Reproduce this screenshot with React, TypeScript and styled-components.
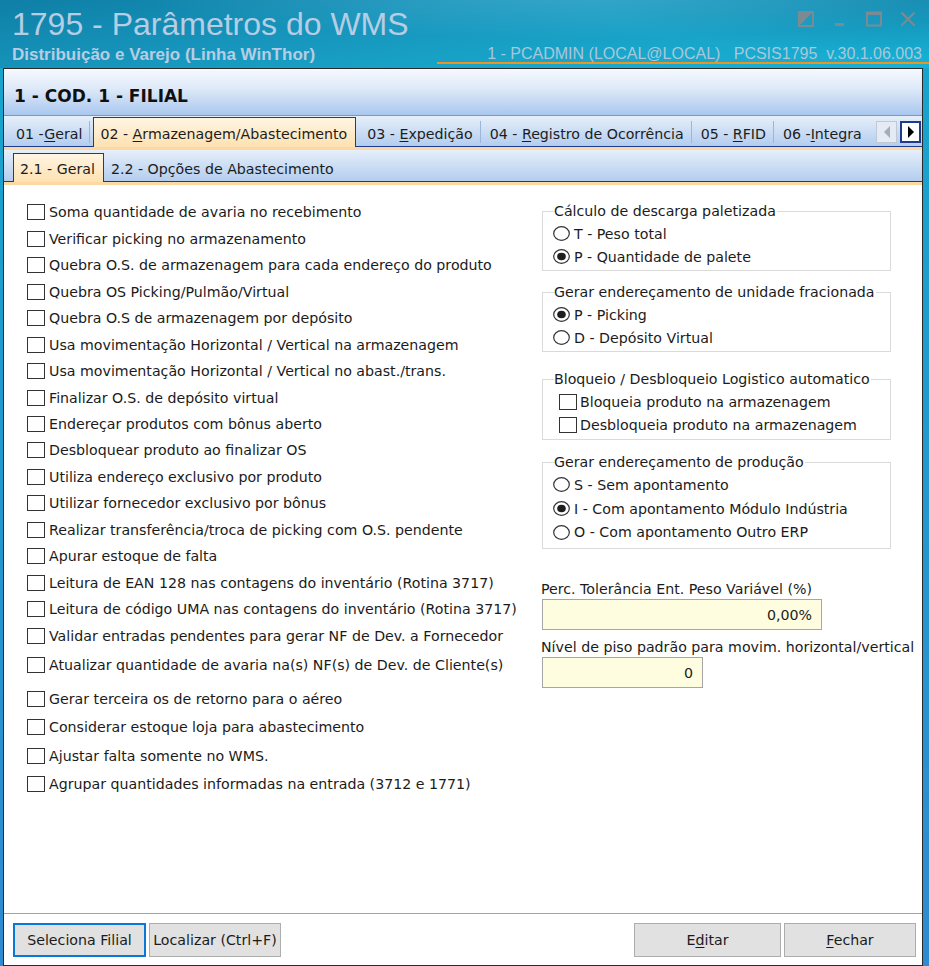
import React from 'react';
import styled, { createGlobalStyle, css } from 'styled-components';

const UI_FONT = `"DejaVu Sans", Tahoma, Verdana, sans-serif`;
const TITLE_FONT = `"Liberation Sans", Arial, sans-serif`;

const GlobalStyle = createGlobalStyle`
  html, body { margin: 0; padding: 0; }
  body {
    width: 929px;
    height: 966px;
    overflow: hidden;
    background: linear-gradient(#16a6cc, #2f8bd1);
    font-family: ${UI_FONT};
    color: #1b1b1b;
  }
`;

/* ---------- title bar ---------- */

const TitleBar = styled.header`
  height: 68px;
  box-sizing: border-box;
  padding-bottom: 4px;
  display: grid;
  grid-template-columns: 1fr auto;
  grid-template-rows: 44px 20px;
  background:
    radial-gradient(70% 110% at 62% -20%, rgba(150, 215, 240, 0.28) 0%, rgba(150, 215, 240, 0) 70%),
    radial-gradient(50% 120% at 100% 0%, rgba(10, 90, 130, 0.35) 0%, rgba(10, 90, 130, 0) 70%),
    linear-gradient(172deg, #0f7fa6 0%, #1796bd 40%, #19a8cc 75%, #15b2d6 100%);
  font-family: ${TITLE_FONT};
  color: #b6cde3;
`;

const AppTitle = styled.h1`
  margin: 0;
  padding: 5px 0 0 12px;
  font-size: 32px;
  line-height: 38px;
  font-weight: normal;
  white-space: nowrap;
`;

const WindowControls = styled.div`
  justify-self: end;
  display: flex;
  align-items: flex-start;
  gap: 18px;
  padding: 11px 13px 0 0;
`;

const ControlGlyph = styled.svg`
  display: block;
  width: 16px;
  height: 16px;
  color: #7c8a93;
`;

const Subtitle = styled.div`
  padding: 1px 0 0 12px;
  font-size: 17px;
  line-height: 19px;
  font-weight: bold;
  white-space: nowrap;
`;

const SessionInfo = styled.div`
  width: 492px;
  box-sizing: border-box;
  padding: 1px 7px 0 0;
  border-bottom: 2px solid #ef9322;
  font-size: 16px;
  line-height: 17px;
  text-align: right;
  white-space: pre;
  color: #a9c7da;
`;

/* ---------- window frame ---------- */

const Window = styled.main`
  height: 898px;
  margin: 0 6px 0 3px;
  box-sizing: border-box;
  border: 1px solid #2a2a2a;
  background: #ffffff;
  display: flex;
  flex-direction: column;
`;

const Header = styled.div`
  flex: none;
  height: 47px;
  box-sizing: border-box;
  padding: 8px 0 0 10px;
  display: flex;
  align-items: center;
  background: linear-gradient(#f6f9fe 0%, #dce8f8 45%, #a9c7ee 100%);
  border-bottom: 1px solid #6d9ad8;
  font-size: 17px;
  font-weight: bold;
  color: #101010;
`;

const TabStrip = styled.div<{ $sub?: boolean }>`
  flex: none;
  box-sizing: border-box;
  height: ${p => (p.$sub ? '35px' : '31px')};
  display: flex;
  align-items: flex-end;
  padding: 0 1px 0 ${p => (p.$sub ? '9px' : '3px')};
  background: linear-gradient(#e6effa, #b3cdef);
  border-bottom: 1px solid #1d3a8c;
  ${p => p.$sub && css`border-top: 3px solid #fcd8a2;`}
`;

const TabList = styled.div`
  flex: 1;
  min-width: 0;
  height: 100%;
  display: flex;
  align-items: flex-end;
  overflow-x: clip;
`;

const Tab = styled.div<{ $active?: boolean; $sub?: boolean }>`
  flex: none;
  box-sizing: border-box;
  display: flex;
  align-items: center;
  white-space: pre;
  font-size: 14.2px;
  color: #1c1c1c;
  ${p =>
    p.$active
      ? css`
          height: ${p.$sub ? '29px' : '30px'};
          margin: 0 ${p.$sub ? 0 : 2}px -1px ${p.$sub ? 0 : 3}px;
          padding: 2px 8px 0 6px;
          background: linear-gradient(#fff5e3, #fde1b1);
          border: 1px solid #1d3a8c;
          border-bottom: none;
          position: relative;
          z-index: 1;
        `
      : css`
          height: 22px;
          margin: 0 0 3px 0;
          padding: 3px 7px 0 ${p.$sub ? 7 : 9}px;
          border-right: 1px solid #9cb6da;
          &:last-child { border-right: none; }
        `}
`;

const TabLabel = styled.span`
  white-space: pre;
`;

const Mnemonic = styled.span`
  text-decoration: underline;
  text-underline-offset: 2px;
`;

const ScrollButtons = styled.div`
  flex: none;
  display: flex;
  gap: 3px;
  align-self: center;
  margin: 2px 0 0 4px;
`;

const ScrollButton = styled.div<{ $enabled?: boolean }>`
  width: 21px;
  height: 22px;
  box-sizing: border-box;
  display: flex;
  align-items: center;
  justify-content: center;
  ${p =>
    p.$enabled
      ? css`
          background: #ffffff;
          border: 2px solid #1d3a8c;
          color: #000000;
        `
      : css`
          background: #e4ebf4;
          border: 1px solid #bfc9d6;
          color: #a3acb8;
        `}
`;

/* ---------- page content ---------- */

const Content = styled.section`
  flex: 1;
  box-sizing: border-box;
  border-top: 3px solid #fcd8a2;
  display: grid;
  grid-template-columns: 514px 350px;
  padding: 0 0 0 23px;
`;

const CheckList = styled.div`
  display: flex;
  flex-direction: column;
  padding-top: 14px;
`;

const CheckRow = styled.label<{ $extra?: number }>`
  height: 26.47px;
  margin-top: ${p => p.$extra ?? 0}px;
  display: flex;
  align-items: center;
  gap: 4px;
  font-size: 14.2px;
  white-space: nowrap;
  color: #1b1b1b;
`;

const BoxGlyph = styled.svg`
  flex: none;
  display: block;
`;

const SideColumn = styled.div`
  display: flex;
  flex-direction: column;
  padding-top: 18px;
`;

const GroupBox = styled.fieldset<{ $gap?: number; $tail?: number; $row?: number }>`
  margin: ${p => p.$gap ?? 0}px 0 0 1px;
  padding: 3px 0 ${p => p.$tail ?? 2}px 10px;
  border: 1px solid #dadada;
  min-width: 0;
  --row: ${p => p.$row ?? 23}px;
`;

const Legend = styled.legend`
  padding: 0 1px 0 0;
  margin-left: 1px;
  font-size: 14.2px;
  line-height: 16px;
  color: #1b1b1b;
  white-space: nowrap;
`;

const OptionRow = styled.label<{ $indent?: number }>`
  height: var(--row);
  display: flex;
  align-items: center;
  gap: ${p => (p.$indent ? 3 : 4)}px;
  padding-left: ${p => p.$indent ?? 0}px;
  font-size: 14.2px;
  white-space: nowrap;
`;

const FieldLabel = styled.div<{ $gap: number }>`
  margin-top: ${p => p.$gap}px;
  font-size: 14.2px;
  line-height: 18px;
  white-space: nowrap;
`;

const NumberField = styled.div<{ $width: number }>`
  width: ${p => p.$width}px;
  height: 31px;
  margin: 1px 0 0 1px;
  box-sizing: border-box;
  border: 1px solid #a6a6a6;
  background: #fffde0;
  display: flex;
  align-items: center;
  justify-content: flex-end;
  padding-right: 9px;
  font-size: 14.2px;
`;

/* ---------- footer ---------- */

const Footer = styled.footer`
  flex: none;
  height: 52px;
  box-sizing: border-box;
  border-top: 1px solid #a3a3a3;
  display: flex;
  align-items: flex-start;
  gap: 3px;
  padding: 9px 6px 0 9px;
`;

const Spacer = styled.div`
  flex: 1;
`;

const Button = styled.button<{ $width: number; $focused?: boolean }>`
  width: ${p => p.$width}px;
  height: 34px;
  box-sizing: border-box;
  margin: 0;
  padding: 0;
  background: #e1e1e1;
  border: ${p => (p.$focused ? '2px solid #0a78d6' : '1px solid #adadad')};
  font-family: ${UI_FONT};
  font-size: 14.2px;
  color: #1b1b1b;
  white-space: nowrap;
  cursor: default;
`;

/* ---------- small drawings ---------- */

const CheckBox = () => (
  <BoxGlyph width="18" height="16" viewBox="0 0 18 16">
    <rect x="0.5" y="0.5" width="17" height="15" fill="#ffffff" stroke="#333333" />
  </BoxGlyph>
);

const Radio = ({ checked }: { checked?: boolean }) => (
  <BoxGlyph width="17" height="15" viewBox="0 0 17 15">
    <ellipse cx="8.5" cy="7.5" rx="7.8" ry="6.8" fill="#ffffff" stroke="#333333" strokeWidth="1.2" />
    {checked && <ellipse cx="8.5" cy="7.5" rx="4.3" ry="3.8" fill="#1e1e1e" />}
  </BoxGlyph>
);

const Arrow = ({ dir }: { dir: 'left' | 'right' }) => (
  <svg width="8" height="12" viewBox="0 0 8 12">
    {dir === 'left' ? <path d="M7 0 L1 6 L7 12 Z" fill="currentColor" /> : <path d="M1 0 L7 6 L1 12 Z" fill="currentColor" />}
  </svg>
);

const RestoreGlyph = () => (
  <ControlGlyph viewBox="0 0 16 16">
    <rect x="1" y="1" width="14" height="14" fill="none" stroke="currentColor" strokeWidth="2" />
    <path d="M1 1 H15 L1 15 Z" fill="currentColor" />
  </ControlGlyph>
);

const MinimizeGlyph = () => (
  <ControlGlyph viewBox="0 0 16 16">
    <rect x="3" y="12" width="9" height="3" fill="currentColor" />
  </ControlGlyph>
);

const MaximizeGlyph = () => (
  <ControlGlyph viewBox="0 0 16 16">
    <rect x="1" y="1.5" width="14" height="13" fill="none" stroke="currentColor" strokeWidth="2" />
    <rect x="1" y="1" width="14" height="3" fill="currentColor" />
  </ControlGlyph>
);

const CloseGlyph = () => (
  <ControlGlyph viewBox="0 0 16 16">
    <path d="M1.5 1.5 L14.5 14.5 M14.5 1.5 L1.5 14.5" stroke="currentColor" strokeWidth="2.2" />
  </ControlGlyph>
);

/* ---------- data ---------- */

const OPTIONS: { text: string; extra?: number }[] = [
  { text: 'Soma quantidade de avaria no recebimento' },
  { text: 'Verificar picking no armazenamento' },
  { text: 'Quebra O.S. de armazenagem para cada endereço do produto' },
  { text: 'Quebra OS Picking/Pulmão/Virtual' },
  { text: 'Quebra O.S de armazenagem por depósito' },
  { text: 'Usa movimentação Horizontal / Vertical na armazenagem' },
  { text: 'Usa movimentação Horizontal / Vertical no abast./trans.' },
  { text: 'Finalizar O.S. de depósito virtual' },
  { text: 'Endereçar produtos com bônus aberto' },
  { text: 'Desbloquear produto ao finalizar OS' },
  { text: 'Utiliza endereço exclusivo por produto' },
  { text: 'Utilizar fornecedor exclusivo por bônus' },
  { text: 'Realizar transferência/troca de picking com O.S. pendente' },
  { text: 'Apurar estoque de falta' },
  { text: 'Leitura de EAN 128 nas contagens do inventário (Rotina 3717)' },
  { text: 'Leitura de código UMA nas contagens do inventário (Rotina 3717)' },
  { text: 'Validar entradas pendentes para gerar NF de Dev. a Fornecedor' },
  { text: 'Atualizar quantidade de avaria na(s) NF(s) de Dev. de Cliente(s)', extra: 2.5 },
  { text: 'Gerar terceira os de retorno para o aéreo', extra: 7.5 },
  { text: 'Considerar estoque loja para abastecimento', extra: 1.5 },
  { text: 'Ajustar falta somente no WMS.', extra: 2.5 },
  { text: 'Agrupar quantidades informadas na entrada (3712 e 1771)', extra: 1.5 },
];

export default function App() {
  return (
    <>
      <GlobalStyle />
      <TitleBar>
        <AppTitle>1795 - Parâmetros do WMS</AppTitle>
        <WindowControls>
          <RestoreGlyph />
          <MinimizeGlyph />
          <MaximizeGlyph />
          <CloseGlyph />
        </WindowControls>
        <Subtitle>Distribuição e Varejo (Linha WinThor)</Subtitle>
        <SessionInfo>{'1 - PCADMIN (LOCAL@LOCAL)   PCSIS1795  v.30.1.06.003'}</SessionInfo>
      </TitleBar>

      <Window>
        <Header>1 - COD. 1 - FILIAL</Header>

        <TabStrip>
          <TabList>
            <Tab><TabLabel>{'01 -'}<Mnemonic>G</Mnemonic>eral</TabLabel></Tab>
            <Tab $active><TabLabel>{'02 - '}<Mnemonic>A</Mnemonic>rmazenagem/Abastecimento</TabLabel></Tab>
            <Tab><TabLabel>{'03 - '}<Mnemonic>E</Mnemonic>xpedição</TabLabel></Tab>
            <Tab><TabLabel>{'04 - '}<Mnemonic>R</Mnemonic>egistro de Ocorrência</TabLabel></Tab>
            <Tab><TabLabel>{'05 - '}<Mnemonic>R</Mnemonic>FID</TabLabel></Tab>
            <Tab><TabLabel>{'06 -'}<Mnemonic>I</Mnemonic>ntegra</TabLabel></Tab>
          </TabList>
          <ScrollButtons>
            <ScrollButton><Arrow dir="left" /></ScrollButton>
            <ScrollButton $enabled><Arrow dir="right" /></ScrollButton>
          </ScrollButtons>
        </TabStrip>

        <TabStrip $sub>
          <TabList>
            <Tab $active $sub><TabLabel>2.1 - Geral</TabLabel></Tab>
            <Tab $sub><TabLabel>2.2 - Opções de Abastecimento</TabLabel></Tab>
          </TabList>
        </TabStrip>

        <Content>
          <CheckList>
            {OPTIONS.map(o => (
              <CheckRow key={o.text} $extra={o.extra}>
                <CheckBox />
                {o.text}
              </CheckRow>
            ))}
          </CheckList>

          <SideColumn>
            <GroupBox>
              <Legend>Cálculo de descarga paletizada</Legend>
              <OptionRow><Radio />T - Peso total</OptionRow>
              <OptionRow><Radio checked />P - Quantidade de palete</OptionRow>
            </GroupBox>

            <GroupBox $gap={13}>
              <Legend>Gerar endereçamento de unidade fracionada</Legend>
              <OptionRow><Radio checked />P - Picking</OptionRow>
              <OptionRow><Radio />D - Depósito Virtual</OptionRow>
            </GroupBox>

            <GroupBox $gap={19} $row={23.5}>
              <Legend>Bloqueio / Desbloqueio Logistico automatico</Legend>
              <OptionRow $indent={6}><CheckBox />Bloqueia produto na armazenagem</OptionRow>
              <OptionRow $indent={6}><CheckBox />Desbloqueia produto na armazenagem</OptionRow>
            </GroupBox>

            <GroupBox $gap={14} $tail={4} $row={23.8}>
              <Legend>Gerar endereçamento de produção</Legend>
              <OptionRow><Radio />S - Sem apontamento</OptionRow>
              <OptionRow><Radio checked />I - Com apontamento Módulo Indústria</OptionRow>
              <OptionRow><Radio />O - Com apontamento Outro ERP</OptionRow>
            </GroupBox>

            <FieldLabel $gap={31}>Perc. Tolerância Ent. Peso Variável (%)</FieldLabel>
            <NumberField $width={280}>0,00%</NumberField>

            <FieldLabel $gap={8}>Nível de piso padrão para movim. horizontal/vertical</FieldLabel>
            <NumberField $width={161}>0</NumberField>
          </SideColumn>
        </Content>

        <Footer>
          <Button $width={133} $focused>Seleciona Filial</Button>
          <Button $width={132}>Localizar (Ctrl+F)</Button>
          <Spacer />
          <Button $width={147}>E<Mnemonic>d</Mnemonic>itar</Button>
          <Button $width={132}><Mnemonic>F</Mnemonic>echar</Button>
        </Footer>
      </Window>
    </>
  );
}
